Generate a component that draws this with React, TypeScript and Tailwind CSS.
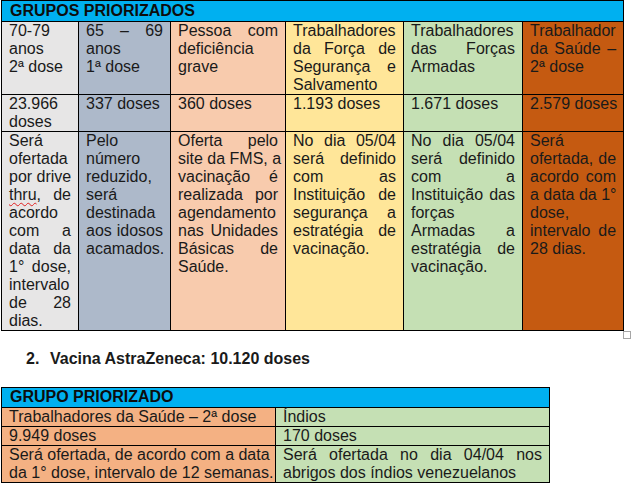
import type { ReactNode } from "react";

const thru = (
  <>
    <span className="underline decoration-wavy decoration-[#e02020] decoration-1 underline-offset-2">
      thru
    </span>
    , de
  </>
);

const cols1 = [
  "bg-[#e7e6e6]",
  "bg-[#adb9ca]",
  "bg-[#f8cbad]",
  "bg-[#ffe699]",
  "bg-[#c5e0b4]",
  "bg-[#c55a11]",
];

const rows1: ReactNode[][][] = [
  [
    ["70-79", "anos", "2ª dose"],
    ["65 – 69", "anos", "1ª dose"],
    ["Pessoa com", "deficiência", "grave"],
    ["Trabalhadores", "da Força de", "Segurança e", "Salvamento"],
    ["Trabalhadores", "das Forças", "Armadas"],
    ["Trabalhador", "da Saúde –", "2ª dose"],
  ],
  [
    ["23.966", "doses"],
    ["337 doses"],
    ["360 doses"],
    ["1.193 doses"],
    ["1.671 doses"],
    ["2.579 doses"],
  ],
  [
    ["Será", "ofertada", "por drive", thru, "acordo", "com a", "data da", "1° dose,", "intervalo", "de 28", "dias."],
    ["Pelo", "número", "reduzido,", "será", "destinada", "aos idosos", "acamados."],
    ["Oferta pelo", "site da FMS, a", "vacinação é", "realizada por", "agendamento", "nas Unidades", "Básicas de", "Saúde."],
    ["No dia 05/04", "será definido", "com as", "Instituição de", "segurança a", "estratégia de", "vacinação."],
    ["No dia 05/04", "será definido", "com a", "Instituição das", "forças", "Armadas a", "estratégia de", "vacinação."],
    ["Será", "ofertada, de", "acordo com", "a data da 1°", "dose,", "intervalo de", "28 dias."],
  ],
];

const rows2: ReactNode[][][] = [
  [["Trabalhadores da Saúde – 2ª dose"], ["Índios"]],
  [["9.949 doses"], ["170 doses"]],
  [
    ["Será ofertada, de acordo com a data", "da 1° dose, intervalo de 12 semanas."],
    ["Será ofertada no dia 04/04 nos", "abrigos dos índios venezuelanos"],
  ],
];

// each line is laid out on its own; every line but the last is justified
function Lines({ lines }: { lines: ReactNode[] }) {
  return (
    <>
      {lines.map((line, i) => (
        <div
          key={i}
          className={
            i < lines.length - 1
              ? "w-max min-w-full text-justify [text-align-last:justify]"
              : "w-max min-w-full"
          }
        >
          {line}
        </div>
      ))}
    </>
  );
}

export default function App() {
  return (
    <div className="relative w-[633px] h-[490px] overflow-hidden bg-white font-['Liberation_Sans',Arial,sans-serif] text-[16px] leading-[18px] text-[#1a1a1a]">
      <div className="pl-px">
        <table className="table-fixed border-collapse w-[622px]">
          <colgroup>
            <col className="w-[77px]" />
            <col className="w-[92px]" />
            <col className="w-[115px]" />
            <col className="w-[118px]" />
            <col className="w-[119px]" />
            <col className="w-[101px]" />
          </colgroup>
          <tbody>
            <tr>
              <td
                colSpan={6}
                className="border border-black bg-[#00b0f0] px-[8px] pt-px pb-px font-bold text-[#0d0d0d]"
              >
                GRUPOS PRIORIZADOS
              </td>
            </tr>
            {rows1.map((row, r) => (
              <tr key={r}>
                {row.map((cell, c) => (
                  <td key={c} className={`border border-black align-top px-[7px] ${cols1[c]}`}>
                    <Lines lines={cell} />
                  </td>
                ))}
              </tr>
            ))}
          </tbody>
        </table>
      </div>

      <div className="mt-[19px] flex font-bold">
        <span className="pl-[26px] w-[50px]">2.</span>
        <span>Vacina AstraZeneca: 10.120 doses</span>
      </div>

      <div className="pl-px mt-[19px]">
        <table className="table-fixed border-collapse w-[548px]">
          <colgroup>
            <col className="w-[274px]" />
            <col className="w-[274px]" />
          </colgroup>
          <tbody>
            <tr>
              <td
                colSpan={2}
                className="border border-black bg-[#00b0f0] px-[8px] pb-px font-bold text-[#0d0d0d]"
              >
                GRUPO PRIORIZADO
              </td>
            </tr>
            {rows2.map((row, r) => (
              <tr key={r}>
                {row.map((cell, c) => (
                  <td
                    key={c}
                    className={`border border-black align-top px-[7px] ${c === 0 ? "bg-[#f4b183]" : "bg-[#c5e0b4]"}`}
                  >
                    <Lines lines={cell} />
                  </td>
                ))}
              </tr>
            ))}
          </tbody>
        </table>
      </div>

      {/* text cursor and table resize handle from the editor */}
      <div className="absolute left-[623px] top-[132px] w-px h-[17px] bg-black" />
      <div className="absolute left-[623px] top-[331px] w-[8px] h-[8px] border border-[#a6a6a6] bg-white" />
    </div>
  );
}
